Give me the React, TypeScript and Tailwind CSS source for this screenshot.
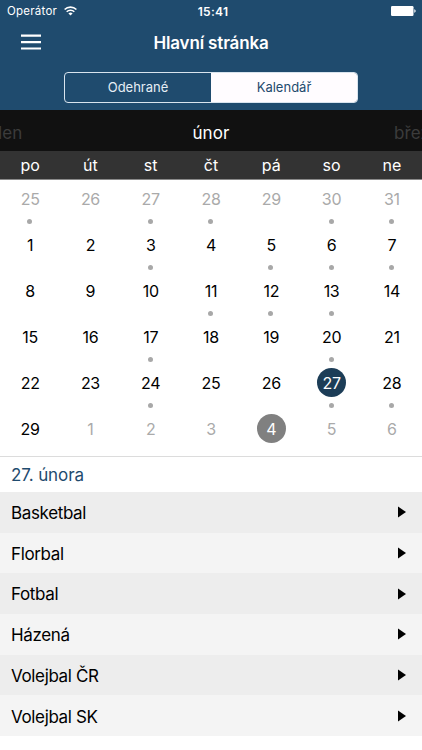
import { useState } from 'react';
import clsx from 'clsx';

interface Day {
  date: number;
  outside?: boolean;
  today?: boolean;
  event?: boolean;
}

const monthNames = ['leden', 'únor', 'březen'];
const weekdays = ['po', 'út', 'st', 'čt', 'pá', 'so', 'ne'];
const tabs = ['Odehrané', 'Kalendář'];
const sports = ['Basketbal', 'Florbal', 'Fotbal', 'Házená', 'Volejbal ČR', 'Volejbal SK'];

// February days with a match
const eventDays = [3, 5, 6, 7, 11, 12, 13, 17, 20, 24, 27, 28];

// The first row starts on January 25th
const days: Day[] = [
  ...[25, 26, 27, 28, 29, 30, 31].map((date) => ({
    date,
    outside: true,
    event: date !== 26 && date !== 29,
  })),
  ...Array.from({ length: 29 }, (_, i) => ({
    date: i + 1,
    event: eventDays.includes(i + 1),
  })),
  ...[1, 2, 3, 4, 5, 6].map((date) => ({ date, outside: true, today: date === 4 })),
];

function StatusBar() {
  return (
    <div className="grid h-[22px] grid-cols-3 items-center pr-[6px] pl-[7px] text-[11.5px]">
      <div className="flex items-center gap-[7px] pt-px tracking-[0.25px]">
        Operátor
        <svg className="-mt-0.5" width="13" height="10" viewBox="0 0 13 10" fill="none" stroke="currentColor" strokeWidth="1.6">
          <path d="M0.6 3.5a8.4 8.4 0 0 1 11.8 0" />
          <path d="M2.7 5.8a5.4 5.4 0 0 1 7.6 0" />
          <path d="M6.5 9.6 4.4 7.5a3 3 0 0 1 4.2 0z" fill="currentColor" stroke="none" />
        </svg>
      </div>
      <div className="pt-0.5 pl-[3px] text-center text-xs font-semibold tracking-[0.3px]">15:41</div>
      <svg className="justify-self-end" width="25" height="10" viewBox="0 0 25 10" fill="currentColor">
        <rect width="22.5" height="10" rx="1.2" />
        <path d="M23.3 3.2c1.8.5 1.8 3.1 0 3.6z" />
      </svg>
    </div>
  );
}

export default function App() {
  const [tab, setTab] = useState(1);
  const [selected, setSelected] = useState(27);

  return (
    <div className="h-[750px] w-[422px] overflow-hidden bg-white font-['Inter',sans-serif] text-black">
      <header className="h-[110px] bg-[#1f4b6e] text-white">
        <StatusBar />

        <div className="grid h-[42px] grid-cols-[1fr_auto_1fr] items-center px-[21px]">
          <button aria-label="Menu" className="-mt-0.5">
            <svg width="20" height="16" viewBox="0 0 20 16" fill="currentColor">
              <path d="M0 .5h20v2.2H0zM0 7h20v2.2H0zM0 13.4h20v2.2H0z" />
            </svg>
          </button>
          <h1 className="pt-0.5 text-[17px] font-semibold tracking-[-0.15px]">Hlavní stránka</h1>
        </div>

        {/* Segmented control */}
        <div className="mx-auto mt-2 grid h-[31px] w-[294px] grid-cols-2 overflow-hidden rounded-[4px] border border-[#d9e4ee] pt-px text-[13px]">
          {tabs.map((name, i) => (
            <button
              key={name}
              onClick={() => setTab(i)}
              className={clsx('-mt-px pt-px', tab === i ? 'bg-[#fffcff] text-[#1f4b6e]' : 'text-[#e6eef5]')}
            >
              {name}
            </button>
          ))}
        </div>
      </header>

      {/* Month picker */}
      <div className="h-[41px] overflow-hidden bg-[#111]">
        <div className="-ml-[105.5px] grid h-full w-[633px] grid-cols-3 items-center pt-[6px] text-center text-[17px] tracking-[0.1px]">
          {monthNames.map((name, i) => (
            <span key={name} className={i === 1 ? 'text-white' : 'text-[#3c3c3c]'}>
              {name}
            </span>
          ))}
        </div>
      </div>

      <div className="grid h-[29px] grid-cols-7 items-center border-b border-[#8a8a8a] bg-[#333] text-center text-base text-white">
        {weekdays.map((name) => (
          <span key={name}>{name}</span>
        ))}
      </div>

      <div className="grid h-[277px] auto-rows-[46.1px] grid-cols-7 overflow-hidden border-b border-[#dcdcdc] text-base tracking-[-0.3px]">
        {days.map((day) => {
          const active = !day.outside && day.date === selected;
          return (
            <button
              key={`${day.outside ? 'out' : 'in'}-${day.date}`}
              onClick={() => !day.outside && setSelected(day.date)}
              className="flex flex-col items-center pt-1"
            >
              <span
                className={clsx(
                  'flex size-[29px] shrink-0 items-center justify-center rounded-full',
                  active && 'bg-[#1c3d57] text-white',
                  day.today && 'bg-[#808080] text-white',
                  day.outside && !day.today && 'text-[#aaa]',
                )}
              >
                {day.date}
              </span>
              {day.event && <span className="mt-[6px] mr-px size-[5px] rounded-full bg-[#a8a8a8]" />}
            </button>
          );
        })}
      </div>

      <h2 className="flex h-[35px] items-center px-[11px] pt-0.5 text-[17px] tracking-[-0.1px] text-[#1f4b6e]">
        {selected}. února
      </h2>

      <ul>
        {sports.map((sport) => (
          <li
            key={sport}
            className="flex h-[40.7px] items-center justify-between bg-[#f4f4f4] pr-4 pl-[11px] text-[17px] tracking-[-0.36px] odd:bg-[#ededed]"
          >
            <span className="pt-[3px]">{sport}</span>
            <svg width="8" height="12" viewBox="0 0 8 12">
              <path d="M0 0.5v11L8 6z" />
            </svg>
          </li>
        ))}
      </ul>
    </div>
  );
}
